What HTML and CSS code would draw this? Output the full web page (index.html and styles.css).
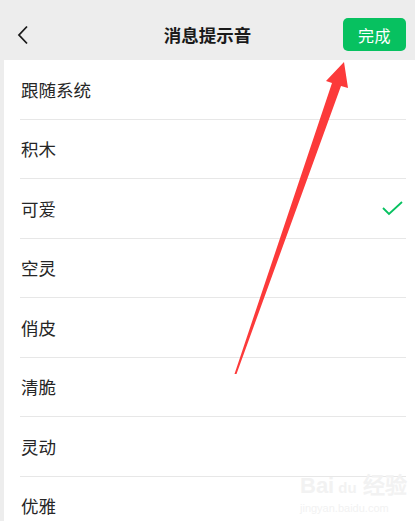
FILE: index.html
```html
<!DOCTYPE html>
<html lang="zh-CN">

<head>
  <meta charset="utf-8" />
  <meta name="viewport" content="width=device-width, initial-scale=1.0" />
  <title>消息提示音</title>
  <link rel="stylesheet" href="styles.css">
</head>

<body>
  <header class="top-bar">
    <button class="back-btn" aria-label="返回">
      <svg width="12" height="20" viewBox="0 0 12 20">
        <polyline points="10,1.5 2,10 10,18.5" fill="none" stroke="#1a1a1a" stroke-width="1.8" />
      </svg>
    </button>
    <h1 class="title">消息提示音</h1>
    <button class="done-btn">完成</button>
  </header>

  <ul class="sound-list">
    <li class="sound-item">跟随系统</li>
    <li class="sound-item">积木</li>
    <li class="sound-item selected">
      <span>可爱</span>
      <svg class="check" width="21" height="15" viewBox="0 0 21 15">
        <polyline points="1,7 7,13 20,1" fill="none" stroke="#07c160" stroke-width="1.8" />
      </svg>
    </li>
    <li class="sound-item">空灵</li>
    <li class="sound-item">俏皮</li>
    <li class="sound-item">清脆</li>
    <li class="sound-item">灵动</li>
    <li class="sound-item">优雅</li>
  </ul>

  <!-- Annotation arrow pointing at the done button -->
  <svg class="arrow" width="415" height="521" viewBox="0 0 415 521">
    <polygon points="234.5,374 332,83 326,81 344,62 348,88 341,86 236.5,374" fill="#fc3a3a" />
  </svg>

  <!-- Watermark -->
  <div class="watermark">
    <div class="wm-logo">Bai<span class="wm-du">du</span> 经验</div>
    <div class="wm-url">jingyan.baidu.com</div>
  </div>
</body>

</html>
```

FILE: styles.css
```css
/* Global Reset */
* {
  margin: 0;
  padding: 0;
  box-sizing: border-box;
}

body {
  font-family: "Noto Sans CJK SC", "Noto Sans", sans-serif;
  background-color: #ededed;
  color: #1a1a1a;
  width: 415px;
  height: 521px;
  overflow: hidden;
  position: relative;
}

/* Top bar */
.top-bar {
  height: 60px;
  display: flex;
  align-items: center;
  justify-content: space-between;
  padding: 0 9px 0 17px;
  position: relative;
}

.back-btn {
  background: none;
  border: none;
  width: 14px;
  height: 20px;
  display: flex;
  align-items: center;
  margin-top: 10px;
}

.title {
  position: absolute;
  left: 0;
  right: 0;
  top: 13px;
  text-align: center;
  font-size: 17.5px;
  font-weight: 600;
  line-height: 44px;
  pointer-events: none;
}

.done-btn {
  background-color: #07c160;
  color: white;
  border: none;
  border-radius: 5px;
  width: 63px;
  height: 33px;
  margin-top: 9px;
  font-family: inherit;
  font-size: 16px;
  letter-spacing: 0.5px;
}

/* List */
.sound-list {
  list-style: none;
  background-color: white;
  margin-left: 4px;
  padding: 0 9px 0 16px;
  height: 461px;
}

.sound-item {
  height: 59.5px;
  border-bottom: 1px solid #e7e7e7;
  display: flex;
  align-items: center;
  justify-content: space-between;
  padding-left: 1px;
  font-size: 17.5px;
  color: #262626;
}

.check {
  margin-right: 3px;
}

/* Overlays */
.arrow {
  position: absolute;
  top: 0;
  left: 0;
}

.watermark {
  position: absolute;
  left: 300px;
  top: 474px;
  color: #f2f2f2;
  font-family: "Liberation Sans", sans-serif;
}

.wm-logo {
  font-size: 22px;
  font-weight: bold;
  line-height: 24px;
}

.wm-du {
  font-size: 15px;
  margin-left: 4px;
}

.wm-url {
  font-size: 11px;
  margin-top: 2px;
}
```
